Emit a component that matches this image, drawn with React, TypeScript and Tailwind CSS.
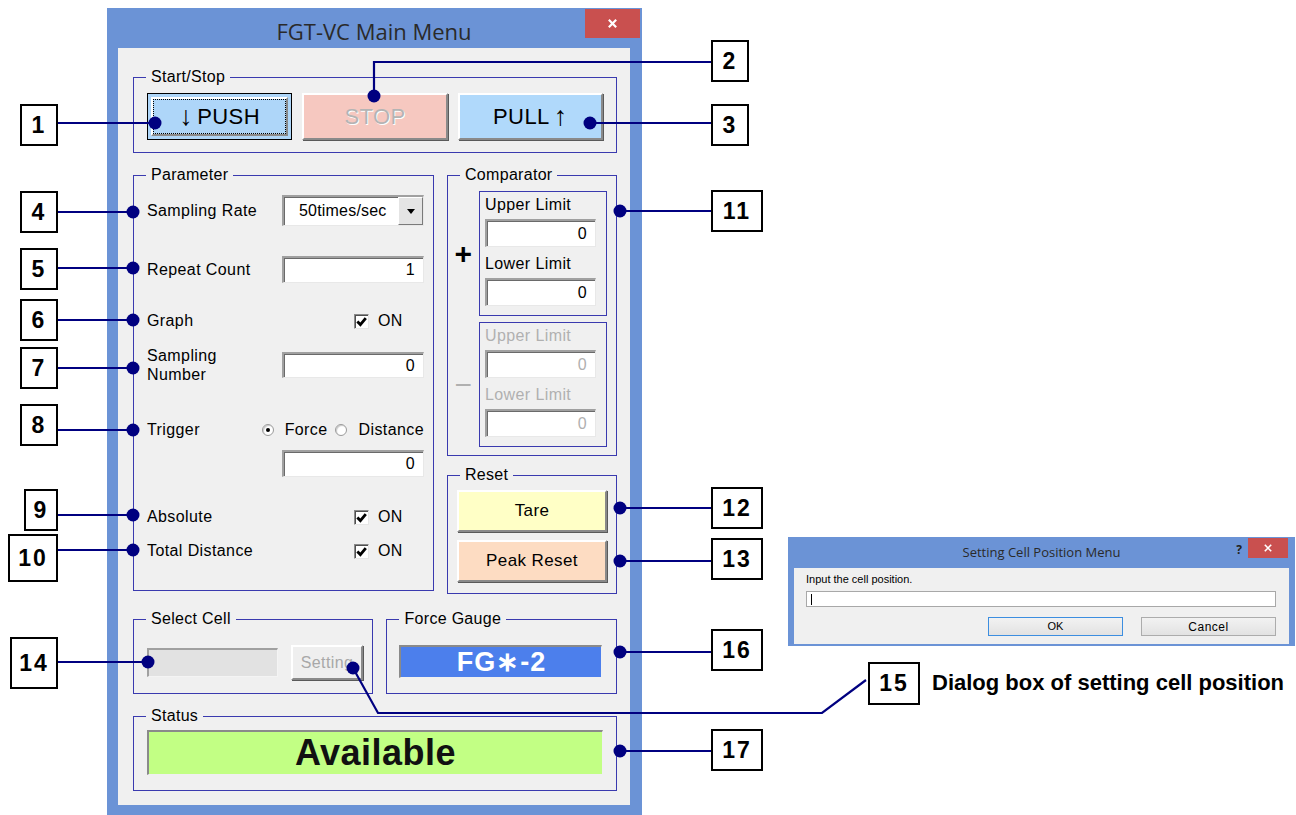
import type { ReactNode } from 'react'

const ui = "font-['Liberation_Sans',Arial,sans-serif]"

function Group({ title, className, children }: { title: string; className?: string; children?: ReactNode }) {
  return (
    <div className={`relative border border-[#3a3aaf] ${className ?? ''}`}>
      <span className="absolute -top-[11px] left-[12px] bg-[#f0f0f0] px-[5px] text-[16px] leading-[20px] tracking-[0.3px] text-black">
        {title}
      </span>
      {children}
    </div>
  )
}

function TextBox({ value, className, disabled }: { value?: string; className?: string; disabled?: boolean }) {
  return (
    <div
      className={`flex items-center justify-end border-t-2 border-l-2 border-b border-r border-t-[#a0a0a0] border-l-[#a0a0a0] border-b-[#e8e8e8] border-r-[#e8e8e8] bg-white pr-[8px] text-[16px] shadow-[inset_1px_1px_0_#6a6a6a] ${disabled ? 'text-[#b0b0b0]' : 'text-black'} ${className ?? ''}`}
    >
      {value}
    </div>
  )
}

function Check() {
  return (
    <span className="flex h-[15px] w-[15px] items-center justify-center border border-t-[#8a8a8a] border-l-[#8a8a8a] border-b-[#e6e6e6] border-r-[#e6e6e6] bg-white shadow-[inset_1px_1px_0_#505050]">
      <svg viewBox="0 0 10 10" className="h-[11px] w-[11px]">
        <path d="M1.2 5 L4 7.8 L8.9 2" fill="none" stroke="#000" strokeWidth="2.6" />
      </svg>
    </span>
  )
}

function Radio({ on }: { on?: boolean }) {
  return (
    <span className="flex h-[12px] w-[12px] items-center justify-center rounded-full border border-[#9a9a9a] bg-white shadow-[inset_1px_1px_1px_#c8c8c8]">
      {on && <span className="h-[4px] w-[4px] rounded-full bg-black" />}
    </span>
  )
}

function CheckRow({ label }: { label: string }) {
  return (
    <div className="flex h-[16px] items-center justify-between">
      <span>{label}</span>
      <div className="flex w-[142px] items-center gap-[9px] pl-[72px]">
        <Check />
        <span>ON</span>
      </div>
    </div>
  )
}

function MainWindow() {
  const raised =
    'border-2 border-t-white border-l-white border-b-[#8a8a8a] border-r-[#8a8a8a] shadow-[1px_1px_0_#5a5a5a]'
  return (
    <div className="absolute left-[107px] top-[8px] flex h-[820px] w-[535px] flex-col bg-[#6b93d6] pl-[11px] pr-[12px]">
      {/* title bar */}
      <div className="relative flex h-[40px] shrink-0 items-center justify-center pt-[6px]">
        <span className="font-['Open_Sans',sans-serif] text-[22px] text-[#2a2a2a]">FGT-VC Main Menu</span>
        <div className="absolute right-[-10px] top-[1px] flex h-[29px] w-[55px] items-center justify-center bg-[#c9504f]">
          <svg viewBox="0 0 12 12" className="h-[11px] w-[11px]">
            <path d="M2 2 L10 10 M10 2 L2 10" stroke="#fff" strokeWidth="2.4" />
          </svg>
        </div>
      </div>

      {/* client */}
      <div className={`flex h-[757px] shrink-0 flex-col bg-[#f0f0f0] pl-[15px] pr-[13px] pt-[29px] text-[16px] tracking-[0.4px] text-black ${ui}`}>
        <Group title="Start/Stop" className="h-[76px] px-[13px] pt-[15px]">
          <div className="grid grid-cols-3 gap-[10px]">
            <div className="h-[47px] border border-black bg-[#aed6f9] p-[3px]">
              <div className={`h-full ${raised} shadow-none`}>
                <div className="flex h-full items-center justify-center gap-[4px] border border-dotted border-black text-[22px]">
                  <span className="text-[27px] font-light leading-none">↓</span>
                  <span>PUSH</span>
                </div>
              </div>
            </div>
            <div className={`flex h-[47px] items-center justify-center bg-[#f6c8c0] text-[22px] text-[#b4b4b4] [text-shadow:1px_1px_0_#fff] ${raised}`}>
              STOP
            </div>
            <div className={`flex h-[47px] items-center justify-center gap-[4px] bg-[#b0d9fb] text-[22px] ${raised}`}>
              <span>PULL</span>
              <span className="text-[27px] font-light leading-none">↑</span>
            </div>
          </div>
        </Group>

        <div className="mt-[22px] flex items-start gap-[13px]">
          <Group title="Parameter" className="flex h-[416px] w-[301px] flex-col pl-[13px] pr-[9px] pt-[19px]">
            <div className="flex h-[31px] items-center justify-between">
              <span>Sampling Rate</span>
              <div className="flex h-[31px] w-[142px] border-t-2 border-l-2 border-b border-r border-t-[#a0a0a0] border-l-[#a0a0a0] border-b-[#e8e8e8] border-r-[#e8e8e8] bg-white shadow-[inset_1px_1px_0_#6a6a6a]">
                <span className="flex-1 pl-[15px] leading-[27px] tracking-[0.2px]">50times/sec</span>
                <span className="flex w-[25px] items-center justify-center border border-t-white border-l-white border-b-[#7a7a7a] border-r-[#7a7a7a] bg-[#e4e4e4]">
                  <svg viewBox="0 0 8 5" className="h-[5px] w-[8px]">
                    <path d="M0 0 H8 L4 5 Z" fill="#000" />
                  </svg>
                </span>
              </div>
            </div>
            <div className="mt-[30px] flex h-[27px] items-center justify-between">
              <span>Repeat Count</span>
              <TextBox value="1" className="h-[27px] w-[142px]" />
            </div>
            <div className="mt-[30px]">
              <CheckRow label="Graph" />
            </div>
            <div className="mt-[23px] flex h-[26px] items-center justify-between">
              <span className="leading-[19px]">
                Sampling
                <br />
                Number
              </span>
              <TextBox value="0" className="h-[26px] w-[142px]" />
            </div>
            <div className="mt-[43px] flex h-[18px] items-center justify-between">
              <span>Trigger</span>
              <div className="flex items-center">
                <Radio on />
                <span className="ml-[11px]">Force</span>
                <span className="ml-[7px]">
                  <Radio />
                </span>
                <span className="ml-[12px]">Distance</span>
              </div>
            </div>
            <div className="mt-[11px] flex justify-end">
              <TextBox value="0" className="h-[27px] w-[142px]" />
            </div>
            <div className="mt-[32px]">
              <CheckRow label="Absolute" />
            </div>
            <div className="mt-[18px]">
              <CheckRow label="Total Distance" />
            </div>
          </Group>

          <div className="flex w-[170px] flex-col">
            <Group title="Comparator" className="flex h-[281px] flex-col gap-[6px] pr-[9px] pt-[15px]">
              {[false, true].map((dis) => (
                <div key={String(dis)} className="flex items-center">
                  <span
                    className={`w-[32px] text-center ${dis ? 'text-[30px] font-normal text-[#b0b0b0]' : 'text-[30px] font-bold text-black'}`}
                  >
                    {dis ? '−' : '+'}
                  </span>
                  <div
                    className={`flex w-[128px] flex-col border border-[#3a3aaf] pb-[9px] pl-[5px] pr-[10px] pt-[3px] ${dis ? 'text-[#b0b0b0]' : 'text-black'}`}
                  >
                    <span className="leading-[20px]">Upper Limit</span>
                    <TextBox value="0" disabled={dis} className="mt-[4px] h-[28px] w-[111px]" />
                    <span className="mt-[7px] leading-[20px]">Lower Limit</span>
                    <TextBox value="0" disabled={dis} className="mt-[4px] h-[28px] w-[111px]" />
                  </div>
                </div>
              ))}
            </Group>
            <Group title="Reset" className="mt-[19px] flex h-[119px] flex-col gap-[8px] px-[9px] pt-[14px]">
              <div className={`flex h-[42px] items-center justify-center bg-[#ffffc6] text-[17px] ${raised}`}>Tare</div>
              <div className={`flex h-[42px] items-center justify-center bg-[#fddcc2] text-[17px] ${raised}`}>Peak Reset</div>
            </Group>
          </div>
        </div>

        <div className="mt-[25px] flex gap-[13px]">
          <Group title="Select Cell" className="flex h-[75px] w-[241px] items-start gap-[13px] pl-[13px] pt-[25px]">
            <div className="mt-[3px] h-[29px] w-[131px] border-t-2 border-l-2 border-b border-r border-t-[#a0a0a0] border-l-[#a0a0a0] border-b-[#f4f4f4] border-r-[#f4f4f4] bg-[#e2e2e2]" />
            <div className={`flex h-[35px] w-[72px] items-center justify-center bg-[#efefef] text-[#a8a8a8] ${raised}`}>
              Setting
            </div>
          </Group>
          <Group title="Force Gauge" className="h-[75px] w-[231px] pl-[12px] pt-[25px]">
            <div className="flex h-[33px] w-[203px] items-center justify-center border-t-2 border-l-2 border-b border-r border-t-[#8a8a8a] border-l-[#8a8a8a] border-b-[#f0f0f0] border-r-[#f0f0f0] bg-[#4c7fec] text-[27px] font-bold tracking-[1px] text-white">
              FG∗-2
            </div>
          </Group>
        </div>

        <Group title="Status" className="mt-[22px] h-[75px] px-[13px] pt-[13px]">
          <div className="flex h-[45px] items-center justify-center border-t-2 border-l-2 border-b border-r border-t-[#8a8a8a] border-l-[#8a8a8a] border-b-[#f0f0f0] border-r-[#f0f0f0] bg-[#c2ff84] text-[36px] font-bold tracking-[0.5px] text-[#111]">
            Available
          </div>
        </Group>
      </div>
    </div>
  )
}

function SettingDialog() {
  return (
    <div className="absolute left-[788px] top-[537px] flex h-[109px] w-[507px] flex-col bg-[#6b93d6] px-[6px] pb-[2px]">
      <div className="relative flex h-[31px] items-center justify-center">
        <span className="font-['Open_Sans',sans-serif] text-[13px] text-[#2a2a2a]">Setting Cell Position Menu</span>
        <span className="absolute right-[47px] top-[4px] font-['Open_Sans',sans-serif] text-[12px] font-bold text-[#222]">?</span>
        <div className="absolute right-[1px] top-[1px] flex h-[20px] w-[40px] items-center justify-center bg-[#c9504f]">
          <svg viewBox="0 0 10 10" className="h-[8px] w-[8px]">
            <path d="M1 1 L9 9 M9 1 L1 9" stroke="#fff" strokeWidth="2" />
          </svg>
        </div>
      </div>
      <div className={`flex flex-1 flex-col bg-[#f0f0f0] pl-[12px] pr-[13px] pt-[4px] text-[11px] ${ui}`}>
        <span className="leading-[14px]">Input the cell position.</span>
        <div className="mt-[5px] flex h-[16px] items-center border border-[#a8a8a8] bg-white pl-[4px]">
          <span className="h-[11px] w-[1px] bg-black" />
        </div>
        <div className="mt-[10px] flex justify-end gap-[18px]">
          <div className="flex h-[19px] w-[135px] items-center justify-center border border-[#3c8ee0] bg-gradient-to-b from-[#f2f2f2] to-[#e2e2e2] text-[11px]">
            OK
          </div>
          <div className="flex h-[19px] w-[135px] items-center justify-center border border-[#acacac] bg-gradient-to-b from-[#f2f2f2] to-[#e2e2e2] text-[12px] tracking-[0.5px]">
            Cancel
          </div>
        </div>
      </div>
    </div>
  )
}

const tags = [
  { n: '1', cls: 'left-[20px] top-[104px] w-[38px] h-[42px]' },
  { n: '2', cls: 'left-[711px] top-[40px] w-[38px] h-[42px]' },
  { n: '3', cls: 'left-[711px] top-[104px] w-[38px] h-[42px]' },
  { n: '4', cls: 'left-[20px] top-[191px] w-[38px] h-[42px]' },
  { n: '5', cls: 'left-[20px] top-[248px] w-[38px] h-[42px]' },
  { n: '6', cls: 'left-[20px] top-[299px] w-[38px] h-[42px]' },
  { n: '7', cls: 'left-[20px] top-[347px] w-[38px] h-[42px]' },
  { n: '8', cls: 'left-[20px] top-[404px] w-[38px] h-[42px]' },
  { n: '9', cls: 'left-[24px] top-[489px] w-[34px] h-[42px]' },
  { n: '10', cls: 'left-[8px] top-[534px] w-[50px] h-[48px]' },
  { n: '11', cls: 'left-[711px] top-[190px] w-[52px] h-[42px]' },
  { n: '12', cls: 'left-[711px] top-[487px] w-[52px] h-[42px]' },
  { n: '13', cls: 'left-[711px] top-[538px] w-[52px] h-[42px]' },
  { n: '14', cls: 'left-[10px] top-[637px] w-[48px] h-[52px]' },
  { n: '15', cls: 'left-[868px] top-[662px] w-[52px] h-[43px]' },
  { n: '16', cls: 'left-[711px] top-[629px] w-[52px] h-[42px]' },
  { n: '17', cls: 'left-[711px] top-[729px] w-[52px] h-[42px]' },
]

const dots: [number, number][] = [
  [155, 123], [374, 96], [590, 123],
  [133, 212], [133, 268], [133, 320], [133, 368], [133, 430], [133, 515], [133, 550],
  [620, 211], [620, 508], [620, 561], [148, 662], [353, 668], [620, 652], [620, 751],
]

function Callouts() {
  return (
    <>
      <svg className="pointer-events-none absolute inset-0" width="1296" height="815">
        <g stroke="#000080" strokeWidth="2.2" fill="none">
          <path d="M58 123H155" />
          <path d="M711 62H374V96" />
          <path d="M711 123H590" />
          <path d="M58 212H133" />
          <path d="M58 268H133" />
          <path d="M58 320H133" />
          <path d="M58 368H133" />
          <path d="M58 430H133" />
          <path d="M58 515H133" />
          <path d="M58 550H133" />
          <path d="M711 211H620" />
          <path d="M711 508H620" />
          <path d="M711 561H620" />
          <path d="M58 662H148" />
          <path d="M353 668L378 713H822L866 680" />
          <path d="M711 652H620" />
          <path d="M711 751H620" />
        </g>
        <g fill="#000080">
          {dots.map(([x, y]) => (
            <circle key={`${x}-${y}`} cx={x} cy={y} r="6.5" />
          ))}
        </g>
      </svg>
      {tags.map((t) => (
        <div
          key={t.n}
          className={`absolute flex items-center justify-center border-2 border-black bg-white text-[23px] font-bold tracking-[2px] text-black ${ui} ${t.cls}`}
        >
          {t.n}
        </div>
      ))}
      <span className={`absolute left-[932px] top-[669px] whitespace-nowrap text-[22px] font-bold leading-[28px] text-black ${ui}`}>
        Dialog box of setting cell position
      </span>
    </>
  )
}

export default function App() {
  return (
    <div className="relative h-[815px] w-[1296px] overflow-hidden bg-white">
      <MainWindow />
      <SettingDialog />
      <Callouts />
    </div>
  )
}
